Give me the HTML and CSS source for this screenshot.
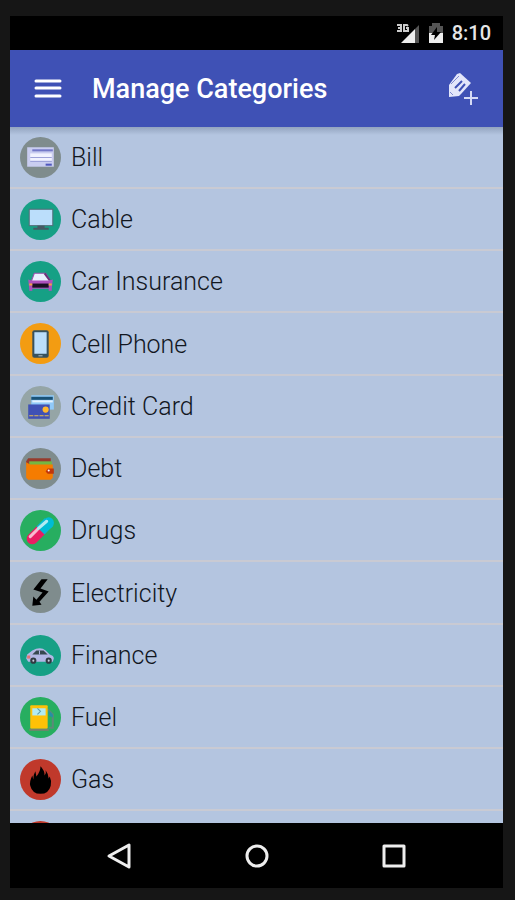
FILE: index.html
```html
<!DOCTYPE html>
<html lang="en">
<head>
    <meta charset="UTF-8">
    <meta name="viewport" content="width=device-width, initial-scale=1.0">
    <title>Manage Categories</title>
    <link rel="stylesheet" href="styles.css">
</head>
<body>
    <div class="screen">
        <!-- System status bar -->
        <div class="status-bar">
            <svg class="signal" width="24" height="22" viewBox="0 0 24 22" aria-hidden="true">
                <path d="M5 21 L19 7 V21 Z" fill="#eee"/>
                <path d="M19 7 L23 3 V21 H19 Z" fill="#555"/>
                <path d="M1 3 H5 V9 H1 M2 6 H5 M12 4 L11 3 H8 V9 H12 V6 H10" fill="none" stroke="#ccc" stroke-width="2"/>
            </svg>
            <svg class="battery" width="16" height="20" viewBox="0 0 16 20" aria-hidden="true">
                <path d="M1 3 H4 V0 H12 V3 H15 V10 H1 Z" fill="#555"/>
                <path d="M1 10 H15 V20 H1 Z" fill="#eee"/>
                <path d="M9 4 L3 12 H7 L6 17 L13 9 H9 Z" fill="#000"/>
            </svg>
            <span class="clock">8:10</span>
        </div>

        <!-- App bar -->
        <header class="app-bar">
            <button class="icon-button" type="button" aria-label="Open menu">
                <svg width="28" height="20" viewBox="0 0 28 20">
                    <path d="M2 2 H26 M2 9 H26 M2 17 H26" stroke="#fff" stroke-width="3" stroke-linecap="round"/>
                </svg>
            </button>
            <h1 class="title">Manage Categories</h1>
            <button class="icon-button" type="button" aria-label="Add category">
                <svg width="32" height="34" viewBox="0 0 32 34">
                    <path d="M2 13 L10 2 L13 1 L24 11 L14 22 L12 24 L2 25 Z" fill="#e3e6fa"/>
                    <path d="M4 12 L12 4" stroke="#7f8ad0" stroke-width="1"/>
                    <path d="M8 16 L15 9 M12 19 L18 12" stroke="#3f51b5" stroke-width="2"/>
                    <path d="M3 20 L6 23" stroke="#7f8ad0" stroke-width="1"/>
                    <path d="M24 19 V33 M17 26 H31" stroke="#d5daf5" stroke-width="2"/>
                </svg>
            </button>
        </header>

        <!-- Category list -->
        <main class="content">
            <ul class="category-list">
                <li class="category">
                    <svg class="category-icon" viewBox="0 0 40 40" aria-hidden="true">
                        <circle cx="20" cy="20" r="20" fill="#7f8c8d"/>
                        <rect x="7" y="10" width="26" height="19" fill="#c9cdf0"/>
                        <path d="M12 13 H32" stroke="#7378c8" stroke-width="2"/>
                        <rect x="10" y="16" width="21" height="7" fill="#f1f2ff"/>
                        <path d="M10 20 H31 M10 24 H31" stroke="#9da2d9" stroke-width="1"/>
                        <path d="M25 27 H31" stroke="#5058bd" stroke-width="2"/>
                    </svg>
                    <span class="category-name">Bill</span>
                </li>
                <li class="category">
                    <svg class="category-icon" viewBox="0 0 40 40" aria-hidden="true">
                        <circle cx="20" cy="20" r="20" fill="#16a085"/>
                        <rect x="9" y="10" width="23" height="16" fill="#bbdefb" stroke="#546e7a" stroke-width="1"/>
                        <path d="M17 26 H24 V28 H28 V30 H13 V28 H17 Z" fill="#455a64"/>
                    </svg>
                    <span class="category-name">Cable</span>
                </li>
                <li class="category">
                    <svg class="category-icon" viewBox="0 0 40 40" aria-hidden="true">
                        <circle cx="20" cy="20" r="20" fill="#16a085"/>
                        <path d="M11 20 L14 12 H25 L30 20 Z" fill="#e8f0ff" stroke="#9c4dad" stroke-width="1"/>
                        <path d="M24 12 L29 19" stroke="#6a3578" stroke-width="2"/>
                        <path d="M8 18 L11 19 H29 L32 18 L31 27 V29 H28 V27 H12 V29 H9 V27 Z" fill="#ad50bd"/>
                        <rect x="12" y="22" width="16" height="4" fill="#1b1024"/>
                        <path d="M9 23 H12 M28 23 H31" stroke="#f0a340" stroke-width="2"/>
                    </svg>
                    <span class="category-name">Car Insurance</span>
                </li>
                <li class="category">
                    <svg class="category-icon" viewBox="0 0 40 40" aria-hidden="true">
                        <circle cx="20" cy="20" r="20" fill="#f39c12"/>
                        <rect x="12" y="7" width="16" height="27" rx="2" fill="#37525e"/>
                        <rect x="14" y="9" width="12" height="21" fill="#bbdefb"/>
                        <path d="M18 32 H22" stroke="#b0bec5" stroke-width="1"/>
                    </svg>
                    <span class="category-name">Cell Phone</span>
                </li>
                <li class="category">
                    <svg class="category-icon" viewBox="0 0 40 40" aria-hidden="true">
                        <circle cx="20" cy="20" r="20" fill="#95a5a6"/>
                        <rect x="11" y="9" width="22" height="14" fill="#90caf9"/>
                        <path d="M11 12 H32" stroke="#1a5276" stroke-width="3"/>
                        <path d="M12 15 H32" stroke="#e3f2fd" stroke-width="2"/>
                        <path d="M8 18 H29 V32 H8 Z" fill="#3f51b5"/>
                        <circle cx="25" cy="23" r="3" fill="#ffb82e"/>
                        <path d="M9 29 H29" stroke="#e8bd50" stroke-width="1" stroke-dasharray="4 1"/>
                    </svg>
                    <span class="category-name">Credit Card</span>
                </li>
                <li class="category">
                    <svg class="category-icon" viewBox="0 0 40 40" aria-hidden="true">
                        <circle cx="20" cy="20" r="20" fill="#7f8c8d"/>
                        <path d="M6 13 L8 10 H30 V16 H6 Z" fill="#963b2d"/>
                        <path d="M9 13 H31 V17 H9 Z" fill="#74b743"/>
                        <path d="M6 14 L10 16 H32 V29 L30 31 H8 L6 29 Z" fill="#f57c00"/>
                        <path d="M27 20 H33 V25 H27 L25 23 Z" fill="#bf360c"/>
                        <circle cx="28" cy="22" r="1" fill="#fff"/>
                    </svg>
                    <span class="category-name">Debt</span>
                </li>
                <li class="category">
                    <svg class="category-icon" viewBox="0 0 40 40" aria-hidden="true">
                        <circle cx="20" cy="20" r="20" fill="#27ae60"/>
                        <path d="M12 28 L21 19" stroke="#e91e63" stroke-width="11" stroke-linecap="round"/>
                        <path d="M20 20 L28 12" stroke="#00bcd4" stroke-width="11"/>
                        <path d="M28 12 L28 13" stroke="#00bcd4" stroke-width="10" stroke-linecap="round"/>
                        <path d="M10 26 L17 19" stroke="#f8bbd0" stroke-width="3" stroke-linecap="round"/>
                        <path d="M18 18 L26 11" stroke="#b2ebf2" stroke-width="3" stroke-linecap="round"/>
                    </svg>
                    <span class="category-name">Drugs</span>
                </li>
                <li class="category">
                    <svg class="category-icon" viewBox="0 0 40 40" aria-hidden="true">
                        <circle cx="20" cy="20" r="20" fill="#7f8c8d"/>
                        <path d="M21 7 H27 L20 16 L28 19 L19 29 L21 32 L12 33 L13 24 L16 27 L22 20 L13 17 Z" fill="#000"/>
                    </svg>
                    <span class="category-name">Electricity</span>
                </li>
                <li class="category">
                    <svg class="category-icon" viewBox="0 0 40 40" aria-hidden="true">
                        <circle cx="20" cy="20" r="20" fill="#16a085"/>
                        <path d="M7 19 L12 15 Q20 11 25 15 L29 19 Q33 20 33 23 L32 26 H8 L6 23 Z" fill="#b3b7e5"/>
                        <path d="M13 18 L16 15 H23 L27 19 H12 Z" fill="#37474f"/>
                        <path d="M19 15 V19" stroke="#b3b7e5" stroke-width="1"/>
                        <circle cx="13" cy="25" r="3" fill="#303a42"/>
                        <circle cx="28" cy="25" r="3" fill="#303a42"/>
                        <circle cx="13" cy="25" r="1" fill="#ccd"/>
                        <circle cx="28" cy="25" r="1" fill="#ccd"/>
                        <path d="M7 20 H10 V23 H7 Z" fill="#e57373"/>
                    </svg>
                    <span class="category-name">Finance</span>
                </li>
                <li class="category">
                    <svg class="category-icon" viewBox="0 0 40 40" aria-hidden="true">
                        <circle cx="20" cy="20" r="20" fill="#27ae60"/>
                        <path d="M27 12 L32 17 V30 H28" fill="none" stroke="#5c8a78" stroke-width="2"/>
                        <path d="M28 13 L32 17 V20 L28 18 Z" fill="#2590a5"/>
                        <rect x="10" y="8" width="17" height="23" rx="1" fill="#ffc107"/>
                        <rect x="12" y="11" width="13" height="7" fill="#b2ebf2"/>
                        <path d="M17 11 L20 14 L17 17" fill="none" stroke="#5a9ba8" stroke-width="1"/>
                        <path d="M9 32 H28" stroke="#78806d" stroke-width="2"/>
                    </svg>
                    <span class="category-name">Fuel</span>
                </li>
                <li class="category">
                    <svg class="category-icon" viewBox="0 0 40 40" aria-hidden="true">
                        <circle cx="20" cy="20" r="20" fill="#c0392b"/>
                        <path d="M20 7 Q24 11 24 16 Q26 14 25 11 Q28 15 28 19 L29 17 Q31 21 30 26 Q28 34 20 34 Q12 34 10 26 Q9 22 12 16 L13 20 Q13 15 15 12 L16 17 Q20 12 20 7 Z" fill="#000"/>
                    </svg>
                    <span class="category-name">Gas</span>
                </li>
                <li class="category">
                    <svg class="category-icon" viewBox="0 0 40 40" aria-hidden="true">
                        <circle cx="20" cy="20" r="20" fill="#c0392b"/>
                    </svg>
                </li>
            </ul>
        </main>

        <!-- System navigation -->
        <nav class="nav-bar">
            <button class="icon-button" type="button" aria-label="Back">
                <svg width="26" height="28" viewBox="0 0 26 28">
                    <path d="M23 3 V25 L3 14 Z" fill="none" stroke="#eee" stroke-width="3" stroke-linejoin="round"/>
                </svg>
            </button>
            <button class="icon-button" type="button" aria-label="Home">
                <svg width="26" height="28" viewBox="0 0 26 28">
                    <circle cx="13" cy="14" r="10" fill="none" stroke="#eee" stroke-width="3"/>
                </svg>
            </button>
            <button class="icon-button" type="button" aria-label="Recent apps">
                <svg width="26" height="28" viewBox="0 0 26 28">
                    <rect x="3" y="4" width="20" height="20" fill="none" stroke="#eee" stroke-width="3" stroke-linejoin="round"/>
                </svg>
            </button>
        </nav>
    </div>
</body>
</html>
```
FILE: styles.css
```css
/* General body styles */
* {
    box-sizing: border-box;
}

body {
    margin: 0;
    height: 100vh;
    padding: 16px 12px 12px 10px; /* Dark frame around the screen */
    background: #161616;
    font-family: Roboto, "Liberation Sans", sans-serif;
}

.screen {
    display: flex;
    flex-direction: column;
    height: 100%;
    background: #000000;
}

/* Status bar styles */
.status-bar {
    display: flex;
    align-items: center;
    justify-content: flex-end;
    gap: 8px;
    height: 34px;
    padding-right: 12px;
    color: #e6e6e6;
}

.clock {
    font-size: 20px;
    font-weight: 500;
    line-height: 24px;
}

/* App bar styles */
.app-bar {
    display: flex;
    align-items: center;
    flex-shrink: 0;
    height: 77px;
    padding: 0 24px;
    background: #3f51b5;
}

.title {
    flex: 1;
    margin: 0 0 0 30px;
    color: #ffffff;
    font-size: 27px;
    font-weight: 500;
    line-height: 32px;
}

.icon-button {
    display: flex;
    padding: 0;
    border: none;
    background: none;
    cursor: pointer;
}

/* Category list styles */
.content {
    flex: 1;
    min-height: 0;
    overflow: hidden;
    background: linear-gradient(#93a4bf, #b4c5e0 8px); /* Shadow under the app bar */
}

.category-list {
    margin: 0;
    padding: 0;
    list-style: none;
}

.category {
    display: flex;
    align-items: center;
    gap: 10px;
    height: 62px;
    padding: 0 10px;
    border-bottom: 2px solid #c9cad3;
    color: #12171f;
}

/* Every fourth row is a little taller */
.category:nth-child(4n) {
    height: 63px;
}

.category-icon {
    width: 41px;
    height: 41px;
}

.category-name {
    padding-top: 2px;
    font-size: 25px;
    font-weight: 300;
    line-height: 32px;
}

/* Navigation bar styles */
.nav-bar {
    display: flex;
    align-items: center;
    justify-content: space-between;
    flex-shrink: 0;
    height: 65px;
    padding: 0 96px;
}
```
